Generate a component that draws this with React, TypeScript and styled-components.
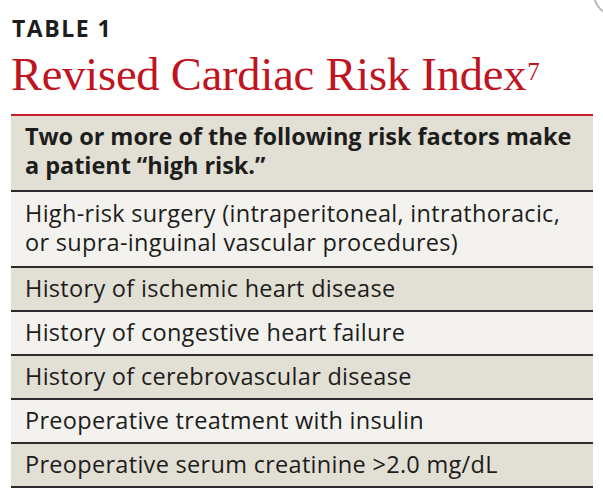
import React from "react";
import styled, { createGlobalStyle } from "styled-components";

const GlobalStyle = createGlobalStyle`
  html, body {
    margin: 0;
    padding: 0;
    background: #ffffff;
  }
`;

const Page = styled.div`
  position: relative;
  width: 603px;
  height: 499px;
  overflow: hidden;
  padding: 14px 10px 0 11px;
  box-sizing: border-box;
  background: #ffffff;
`;

const Label = styled.div`
  font-family: "Open Sans", "Noto Sans", sans-serif;
  font-weight: 700;
  font-size: 23px;
  line-height: 28px;
  color: #1d1d1b;
  letter-spacing: 1.5px;
  padding-left: 1px;
`;

const Title = styled.h1`
  margin: 4px 0 0 0;
  font-family: "Liberation Serif", "DejaVu Serif", serif;
  font-weight: 400;
  font-size: 46.5px;
  line-height: 58px;
  color: #c0141f;
  letter-spacing: -0.2px;

  sup {
    font-size: 25px;
    line-height: 0;
    vertical-align: 10px;
    margin-left: 1px;
  }
`;

const Table = styled.div`
  margin-top: 10px;
  border-top: 2px solid #c8202a;
  display: flex;
  flex-direction: column;
`;

const Row = styled.div<{ $shade: boolean; $bold?: boolean; $tall?: boolean }>`
  background: ${(p) => (p.$shade ? "#e2dfd5" : "#f3f2ee")};
  border-bottom: 2px solid #2b2b2b;
  padding: ${(p) =>
    p.$bold ? "6px 14px 10px 14px" : p.$tall ? "7px 14px 9px 14px" : "6px 14px 7px 14px"};
  font-family: "Open Sans", "Noto Sans", sans-serif;
  font-weight: ${(p) => (p.$bold ? 700 : 400)};
  font-size: 23.5px;
  line-height: 29px;
  letter-spacing: ${(p) => (p.$bold ? "-0.05px" : "0.3px")};
  color: #1d1d1b;
`;

const Corner = styled.div`
  position: absolute;
  top: -28px;
  right: -34px;
  width: 40px;
  height: 40px;
  border-radius: 50%;
  border: 2px solid #b8b8b8;
`;

const rows = [
  "High-risk surgery (intraperitoneal, intrathoracic, or supra-inguinal vascular procedures)",
  "History of ischemic heart disease",
  "History of congestive heart failure",
  "History of cerebrovascular disease",
  "Preoperative treatment with insulin",
  "Preoperative serum creatinine >2.0 mg/dL",
];

const App: React.FC = () => {
  return (
    <>
      <GlobalStyle />
      <Page>
        <Corner />
        <Label>TABLE 1</Label>
        <Title>
          Revised Cardiac Risk Index<sup>7</sup>
        </Title>
        <Table>
          <Row $shade={true} $bold>
            Two or more of the following risk factors make a patient “high risk.”
          </Row>
          {rows.map((text, i) => (
            <Row key={i} $shade={i % 2 === 1} $tall={i === 0}>
              {text}
            </Row>
          ))}
        </Table>
      </Page>
    </>
  );
};

export default App;
